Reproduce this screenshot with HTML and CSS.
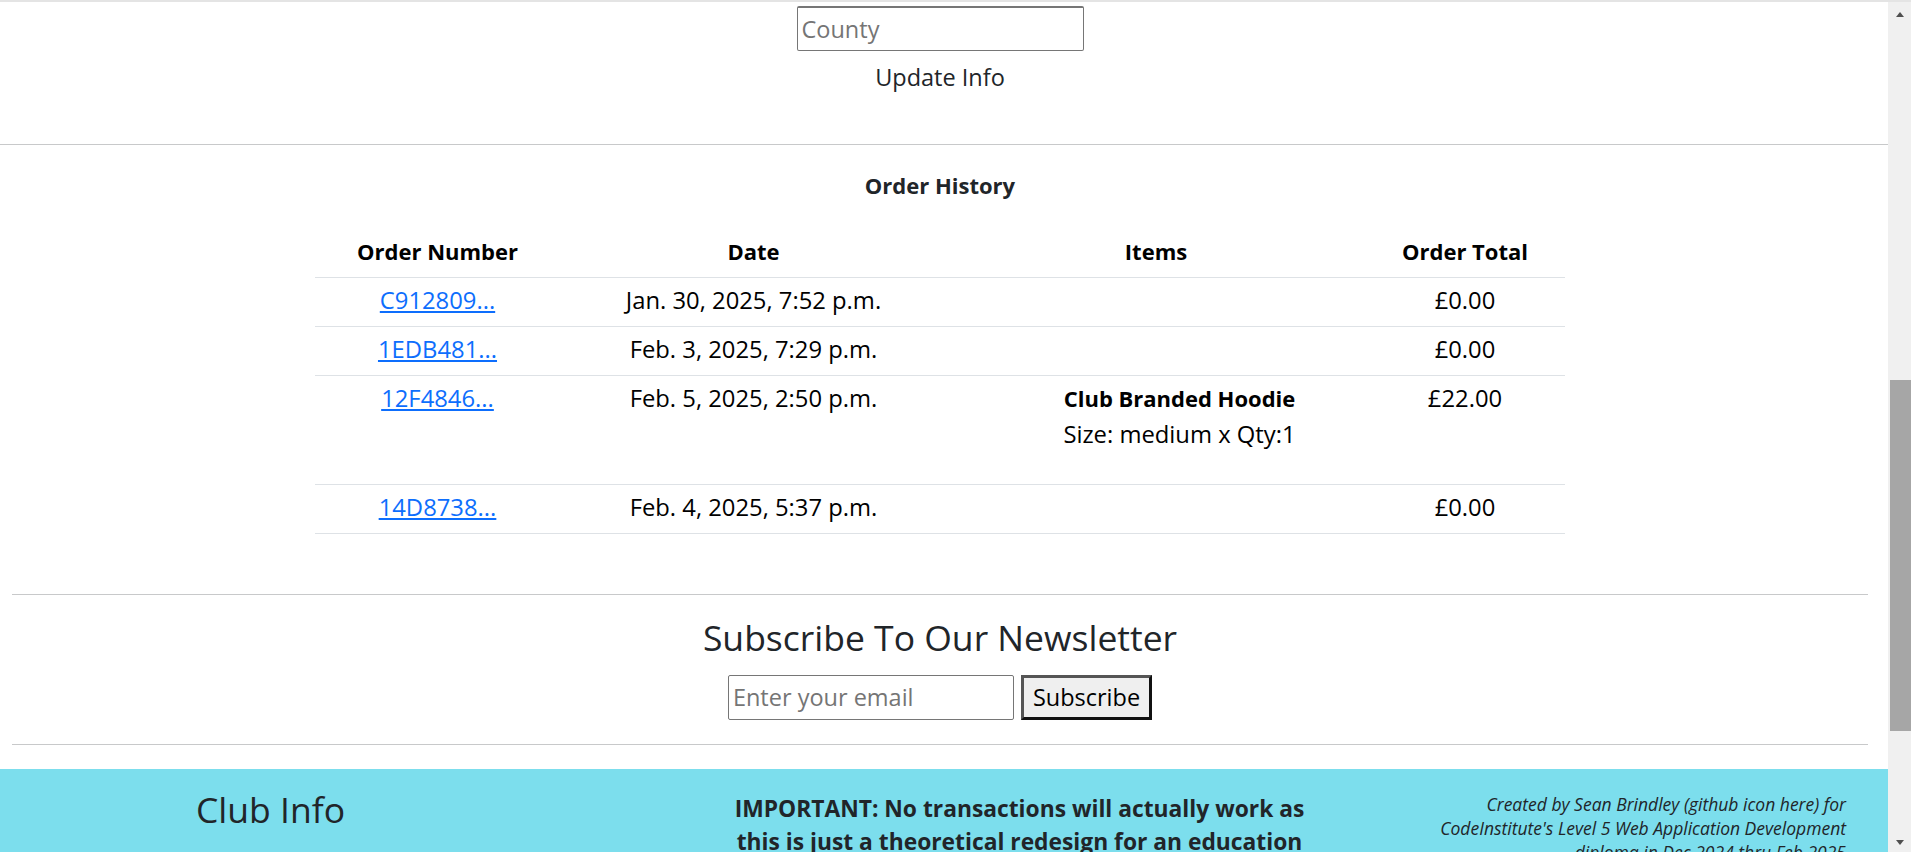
FILE: index.html
```html
<!DOCTYPE html>
<html lang="en">
<head>
<meta charset="utf-8">
<title>My Profile</title>
<link rel="stylesheet" href="styles.css">
</head>
<body>
<div class="page">
  <main>
    <section class="profile content">
      <form class="profile-form">
        <input class="field" id="id_county" type="text" placeholder="County">
        <button class="update-btn" type="button">Update Info</button>
      </form>
    </section>
    <hr class="section-rule">
    <section class="orders content">
      <h3 class="orders-title">Order History</h3>
      <table class="orders-table">
        <colgroup>
          <col class="col-number"><col class="col-date"><col class="col-items"><col class="col-total">
        </colgroup>
        <thead>
          <tr><th>Order Number</th><th>Date</th><th>Items</th><th>Order Total</th></tr>
        </thead>
        <tbody>
          <tr><td><a href="#">C912809...</a></td><td>Jan. 30, 2025, 7:52 p.m.</td><td></td><td>£0.00</td></tr>
          <tr><td><a href="#">1EDB481...</a></td><td>Feb. 3, 2025, 7:29 p.m.</td><td></td><td>£0.00</td></tr>
          <tr><td><a href="#">12F4846...</a></td><td>Feb. 5, 2025, 2:50 p.m.</td><td>
            <ul class="item-list">
              <li class="item-name">Club Branded Hoodie</li>
              <li class="item-meta">Size: medium x Qty:1</li>
            </ul></td><td>£22.00</td></tr>
          <tr><td><a href="#">14D8738...</a></td><td>Feb. 4, 2025, 5:37 p.m.</td><td></td><td>£0.00</td></tr>
        </tbody>
      </table>
    </section>
    <section class="newsletter content">
      <hr class="news-rule">
      <h2 class="news-title">Subscribe To Our Newsletter</h2>
      <form class="news-form">
        <input class="news-input" type="email" placeholder="Enter your email">
        <button class="news-btn" type="button">Subscribe</button>
      </form>
      <hr class="news-rule">
    </section>
  </main>
  <footer class="site-footer">
    <div class="footer-col footer-club">
      <h2 class="footer-heading">Club Info</h2>
    </div>
    <div class="footer-col footer-notice">
      <p class="notice">IMPORTANT: No transactions will actually work as this is just a theoretical redesign for an education project. Please do not enter real card details.</p>
    </div>
    <div class="footer-col footer-credits">
      <p class="credits">Created by Sean Brindley (github icon here) for CodeInstitute's Level 5 Web Application Development diploma in Dec 2024 thru Feb 2025</p>
    </div>
  </footer>
</div>
<div class="scrollbar" aria-hidden="true">
  <span class="sb-arrow sb-up"></span>
  <span class="sb-track"><span class="sb-thumb"></span></span>
  <span class="sb-arrow sb-down"></span>
</div>
</body>
</html>
```
FILE: styles.css
```css
* { box-sizing: border-box; }

body {
  margin: 0;
  font-family: "Open Sans", "DejaVu Sans", sans-serif;
  font-size: 23.5px;
  line-height: 1.362;
  color: #212529;
  background: #fff;
}

.page {
  margin-right: 23px;
  border-top: 2px solid #e4e4e4;
}

.content { margin-right: 8px; }

/* profile form (tail end) */
.profile {
  padding: 4px 0 51px;
  display: flex;
  flex-direction: column;
  align-items: center;
}
.profile-form { display: flex; flex-direction: column; align-items: center; }
.field, .news-input {
  width: 287px;
  height: 45px;
  padding: 0 4px;
  border: 1px solid #767676;
  border-radius: 2px;
  font-family: "Open Sans", "DejaVu Sans", sans-serif;
  font-size: 23.5px;
  color: #212529;
  background: #fff;
}
.field { border-top: 2px solid #767676; }
.field::placeholder, .news-input::placeholder { color: #757575; }
.update-btn {
  margin-top: 10px;
  padding: 0;
  border: 0;
  background: none;
  font-family: "Open Sans", "DejaVu Sans", sans-serif;
  font-size: 23.5px;
  line-height: 32px;
  color: #212529;
}

.section-rule {
  margin: 0;
  border: 0;
  border-top: 1px solid #c8c9ca;
}

/* orders */
.orders { padding: 24px 0 60px; }
.orders-title {
  text-align: center;
  font-size: 22px;
  line-height: 33px;
  font-weight: 700;
  margin: 0 0 27px;
}
.orders-table {
  width: 1250px;
  margin: 0 auto;
  border-collapse: collapse;
  table-layout: fixed;
  color: #000;
}
.col-number { width: 245px; }
.col-date { width: 387px; }
.col-items { width: 418px; }
.col-total { width: 200px; }
.orders-table th,
.orders-table td {
  padding: 4px 8px 8px;
  border-bottom: 1px solid #dee2e6;
  text-align: center;
  vertical-align: top;
  line-height: 36px;
}
.orders-table th { font-size: 22px; font-weight: 700; }
.orders-table td { font-size: 23.8px; }
.orders-table a { color: #0d6efd; text-decoration: underline; }
.item-list { list-style: none; margin: 0 0 24px; padding: 0 0 0 47px; }
.item-name { font-size: 22px; font-weight: 700; }

/* newsletter */
.newsletter { text-align: center; padding-bottom: 24px; }
.news-rule { margin: 0 12px; border: 0; border-top: 1px solid #c8c9ca; }
.news-title {
  font-size: 35.5px;
  line-height: 1.2;
  font-weight: 400;
  margin: 21px 0 16px;
}
.news-form { display: flex; justify-content: center; gap: 7px; margin-bottom: 24px; }
.news-input { width: 286px; }
.news-btn {
  height: 45px;
  padding: 0 9px;
  border: 3px solid #111;
  border-top-color: #555;
  border-left-color: #555;
  background: #efefef;
  font-family: "Open Sans", "DejaVu Sans", sans-serif;
  font-size: 23.5px;
  color: #000;
}

/* footer */
.site-footer {
  min-height: 326px;
  padding-top: 23px;
  background: #7cdeed;
  display: grid;
  grid-template-columns: 608fr 823fr 457fr;
  align-items: start;
}
.footer-club { padding-left: 196px; }
.footer-heading { font-size: 35.5px; line-height: 1; font-weight: 400; margin: 0; }
.notice {
  max-width: 580px;
  margin: 0 auto;
  text-align: center;
  font-size: 22.8px;
  line-height: 33px;
  font-weight: 700;
}
.credits {
  margin: 0;
  padding-right: 42px;
  text-align: right;
  font-style: italic;
  font-size: 17.5px;
  line-height: 24.4px;
}

/* window scrollbar drawn over the right edge */
.scrollbar {
  position: fixed;
  top: 0;
  right: 0;
  width: 23px;
  height: 100vh;
  display: flex;
  flex-direction: column;
  background: #f0f0f0;
  border-top: 2px solid #e4e4e4;
}
.sb-arrow {
  height: 21px;
  flex: none;
  display: flex;
  justify-content: center;
}
.sb-up::before {
  content: "";
  margin-top: 10px;
  width: 0;
  height: 0;
  border-left: 4.5px solid transparent;
  border-right: 4.5px solid transparent;
  border-bottom: 5px solid #505050;
}
.sb-down::before {
  content: "";
  margin-top: 9px;
  width: 0;
  height: 0;
  border-left: 4.5px solid transparent;
  border-right: 4.5px solid transparent;
  border-top: 5px solid #505050;
}
.sb-track { flex: 1; display: block; }
.sb-thumb {
  display: block;
  margin: 357px 0 0 2px;
  height: 351px;
  background: #a6a6a6;
}
```
